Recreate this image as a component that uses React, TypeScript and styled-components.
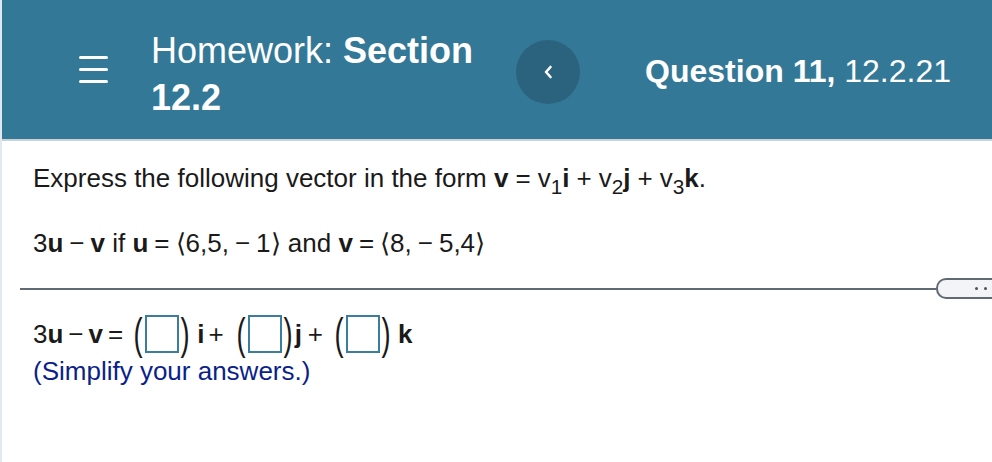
import React from "react";
import styled, { createGlobalStyle } from "styled-components";

const GlobalStyle = createGlobalStyle`
  html, body {
    margin: 0;
    padding: 0;
    background: #ffffff;
  }
  body {
    font-family: "Liberation Sans", Arial, Helvetica, sans-serif;
    color: #1a1a1a;
  }
`;

const Page = styled.div`
  width: 992px;
  height: 462px;
  overflow: hidden;
  position: relative;
  box-sizing: border-box;
  border-left: 2px solid rgba(190, 205, 215, 0.45);
`;

const Header = styled.header`
  height: 139px;
  background: #337896;
  border-bottom: 2px solid #c8d0d8;
  display: flex;
  align-items: center;
  padding-left: 77px;
  padding-right: 41px;
  color: #ffffff;
`;

const MenuButton = styled.div`
  width: 29px;
  display: flex;
  flex-direction: column;
  gap: 9px;
  margin-right: 43px;

  span {
    display: block;
    height: 3px;
    border-radius: 2px;
    background: #ffffff;
  }
`;

const Title = styled.div`
  width: 345px;
  font-size: 36px;
  line-height: 47px;
  margin-top: 9px;

  b {
    font-weight: 700;
  }
`;

const NavCircle = styled.div`
  width: 64px;
  height: 64px;
  border-radius: 50%;
  background: #2b637f;
  display: flex;
  align-items: center;
  justify-content: center;
  margin-left: 20px;
  margin-top: 5px;
`;

const Question = styled.div`
  flex: 1;
  text-align: right;
  font-size: 32px;
  margin-top: 4px;

  b {
    font-weight: 700;
  }
`;

const Content = styled.main`
  padding: 22px 0 0 31px;
  font-size: 26px;
`;

const Line = styled.p<{ $top?: number }>`
  margin: ${(p) => p.$top ?? 0}px 0 0;
  line-height: 30px;
  white-space: nowrap;

  b {
    font-weight: 700;
  }
  sub {
    font-size: 0.8em;
    vertical-align: -0.35em;
    line-height: 0;
  }
`;

const Op = styled.span<{ $l?: number; $r?: number }>`
  margin-left: ${(p) => p.$l ?? 6}px;
  margin-right: ${(p) => p.$r ?? 6}px;
`;

const RuleRow = styled.div`
  display: flex;
  align-items: center;
  margin: 20px 0 0 -13px;
`;

const Rule = styled.div`
  flex: 1;
  height: 2px;
  background: #5f6a75;
`;

const Expander = styled.div`
  width: 49px;
  height: 17px;
  border: 2px solid #5f6a75;
  border-right: none;
  border-radius: 10px 0 0 10px;
  background: #f3f4f6;
  display: flex;
  align-items: center;
  justify-content: flex-end;
  gap: 6px;
  padding-right: 5px;
  box-sizing: content-box;

  i {
    width: 3px;
    height: 3px;
    border-radius: 50%;
    background: #4a525a;
  }
`;

const AnswerRow = styled.div`
  display: flex;
  align-items: center;
  margin-top: 13px;
  height: 44px;
  white-space: pre;

  b {
    font-weight: 700;
  }
`;

const Paren = styled.span`
  display: flex;
  justify-content: center;
  width: 10px;
  font-size: 44px;
  line-height: 44px;
  transform: scaleX(0.62);
`;

const AnswerBox = styled.span`
  display: inline-block;
  width: 30px;
  height: 34px;
  margin: 0 1px 0 2px;
  border: 2px solid #3b7d9c;
  background: #ffffff;
`;

const Hint = styled.div`
  color: #0b1f8b;
  line-height: 30px;
`;

const Chevron = () => (
  <svg width="10" height="14" viewBox="0 0 10 14">
    <path
      d="M7.5 2 L3 7 L7.5 12"
      fill="none"
      stroke="#ffffff"
      strokeWidth="2.6"
      strokeLinecap="round"
      strokeLinejoin="round"
    />
  </svg>
);

const Slot = () => (
  <>
    <Paren>(</Paren>
    <AnswerBox />
    <Paren>)</Paren>
  </>
);

export default function App() {
  return (
    <>
      <GlobalStyle />
      <Page>
        <Header>
          <MenuButton>
            <span />
            <span />
            <span />
          </MenuButton>
          <Title>
            Homework: <b>Section 12.2</b>
          </Title>
          <NavCircle>
            <Chevron />
          </NavCircle>
          <Question>
            <b>Question 11,</b> 12.2.21
          </Question>
        </Header>

        <Content>
          <Line $top={0}>
            Express the following vector in the form <b>v</b>
            <Op $l={7} $r={7}>=</Op>v<sub>1</sub>
            <b>i</b>
            <Op $l={7} $r={7}>+</Op>v<sub>2</sub>
            <b>j</b>
            <Op $l={7} $r={7}>+</Op>v<sub>3</sub>
            <b>k</b>.
          </Line>
          <Line $top={35}>
            3<b>u</b>
            <Op>−</Op>
            <b>v</b> if <b>u</b>
            <Op>=</Op>⟨6,5,<Op>−</Op>1⟩ and <b>v</b>
            <Op>=</Op>⟨8,<Op>−</Op>5,4⟩
          </Line>

          <RuleRow>
            <Rule />
            <Expander>
              <i />
              <i />
            </Expander>
          </RuleRow>

          <AnswerRow>
            3<b>u</b>
            <Op $l={5} $r={5}>−</Op>
            <b>v</b>
            <Op $l={5} $r={10}>=</Op>
            <Slot />
            <Op as="b" $l={7} $r={4}>i</Op>
            <Op $l={0} $r={12}>+</Op>
            <Slot />
            <Op as="b" $l={2} $r={6}>j</Op>
            <Op $l={0} $r={11}>+</Op>
            <Slot />
            <Op as="b" $l={7} $r={0}>k</Op>
          </AnswerRow>
          <Hint>(Simplify your answers.)</Hint>
        </Content>
      </Page>
    </>
  );
}
